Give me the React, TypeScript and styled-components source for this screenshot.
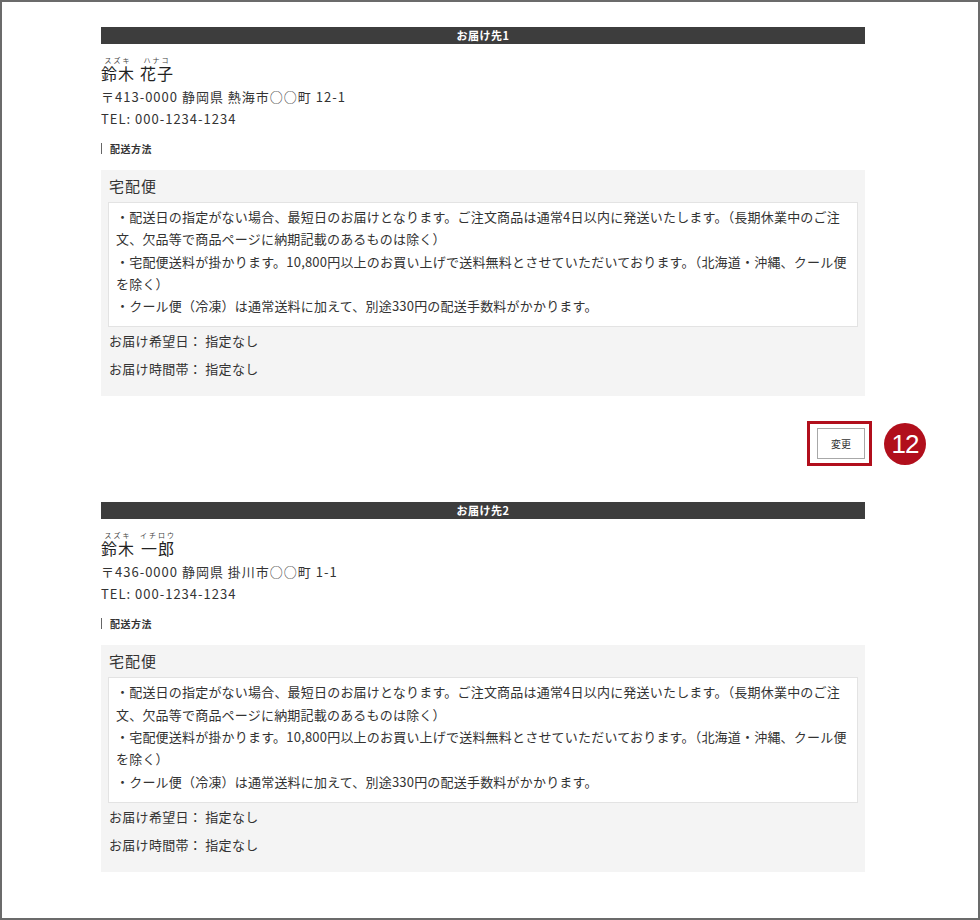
import React from "react";
import styled, { createGlobalStyle } from "styled-components";

const GlobalStyle = createGlobalStyle`
  html, body {
    margin: 0;
    padding: 0;
    background: #fff;
  }
  body {
    font-family: "Noto Sans CJK JP", "Noto Sans", sans-serif;
    color: #333;
  }
`;

const Frame = styled.div`
  box-sizing: border-box;
  width: 980px;
  height: 920px;
  border: 2px solid #6b6b6b;
  padding: 25px 0 0 99px;
  overflow: hidden;
`;

const Column = styled.div`
  width: 764px;
`;

const Section = styled.section`
  margin-bottom: 43px;
`;

const HeadBar = styled.div`
  height: 17px;
  background: #3d3d3d;
  color: #fff;
  font-size: 11px;
  font-weight: 700;
  line-height: 17px;
  text-align: center;
  letter-spacing: 0.5px;
`;

const NameRow = styled.div`
  margin-top: 12px;
  display: flex;
  align-items: flex-end;
  gap: 5px;
  color: #222;
`;

const RubyWord = styled.span`
  display: inline-flex;
  flex-direction: column;
  align-items: center;
`;

const Kana = styled.span`
  font-size: 7px;
  line-height: 8px;
  letter-spacing: 2px;
  color: #444;
`;

const Base = styled.span`
  font-size: 16px;
  line-height: 18px;
  letter-spacing: 1px;
`;

const InfoLine = styled.div`
  font-size: 13px;
  line-height: 22px;
  letter-spacing: 1px;
`;

const Address = styled.div`
  margin-top: 4px;
`;

const SubLabel = styled.div`
  margin-top: 13px;
  border-left: 1px solid #666;
  padding-left: 8px;
  font-size: 10px;
  font-weight: 700;
  line-height: 11px;
  letter-spacing: 0.5px;
  color: #333;
`;

const MethodBox = styled.div`
  margin-top: 16px;
  background: #f4f4f4;
  padding: 6px 7px 13px;
`;

const MethodTitle = styled.div`
  font-size: 15px;
  line-height: 20px;
  padding-left: 1px;
  margin-bottom: 6px;
  letter-spacing: 1px;
`;

const NoteBox = styled.div`
  background: #fff;
  border: 1px solid #e3e3e3;
  padding: 3px 5px 9px 7px;
  font-size: 13px;
  line-height: 22.3px;
  letter-spacing: 0.2px;
`;

const WishLine = styled.div`
  font-size: 13px;
  line-height: 28px;
  padding-left: 1px;
  letter-spacing: 0.3px;

  &:first-of-type {
    margin-top: 5px;
  }
`;

const ButtonRow = styled.div`
  display: flex;
  justify-content: flex-end;
  margin-top: 32px;
`;

const Highlight = styled.div`
  position: relative;
  display: flex;

  &::before {
    content: "";
    position: absolute;
    top: -7px;
    bottom: -7px;
    left: -10px;
    right: -7px;
    border: 3px solid #b10f1c;
    pointer-events: none;
  }
`;

const Badge = styled.div`
  position: absolute;
  left: calc(100% + 19px);
  top: 50%;
  transform: translateY(-50%);
  width: 42px;
  height: 42px;
  border-radius: 50%;
  background: #b10f1c;
  color: #fff;
  font-family: "Liberation Sans", Arial, sans-serif;
  font-size: 26px;
  line-height: 42px;
  text-align: center;
  letter-spacing: -1px;
`;

const ChangeButton = styled.button`
  width: 48px;
  height: 31px;
  background: #fff;
  border: 1px solid #a8a8a8;
  font-family: "Noto Sans CJK JP", sans-serif;
  font-size: 10px;
  color: #333;
  padding: 0;
  cursor: pointer;
`;

type Destination = {
  index: number;
  family: [string, string];
  given: [string, string];
  address: string;
};

const destinations: Destination[] = [
  {
    index: 1,
    family: ["鈴木", "スズキ"],
    given: ["花子", "ハナコ"],
    address: "〒413-0000 静岡県 熱海市○○町 12-1",
  },
  {
    index: 2,
    family: ["鈴木", "スズキ"],
    given: ["一郎", "イチロウ"],
    address: "〒436-0000 静岡県 掛川市○○町 1-1",
  },
];

const Word = ({ pair }: { pair: [string, string] }) => (
  <RubyWord>
    <Kana>{pair[1]}</Kana>
    <Base>{pair[0]}</Base>
  </RubyWord>
);

const DeliveryBlock = ({ data, withButton }: { data: Destination; withButton?: boolean }) => (
  <Section>
    <HeadBar>お届け先{data.index}</HeadBar>
    <NameRow>
      <Word pair={data.family} />
      <Word pair={data.given} />
    </NameRow>
    <Address>
      <InfoLine>{data.address}</InfoLine>
      <InfoLine>TEL: 000-1234-1234</InfoLine>
    </Address>
    <SubLabel>配送方法</SubLabel>
    <MethodBox>
      <MethodTitle>宅配便</MethodTitle>
      <NoteBox>
        ・配送日の指定がない場合、最短日のお届けとなります。ご注文商品は通常4日以内に発送いたします。（長期休業中のご注文、欠品等で商品ページに納期記載のあるものは除く）
        <br />
        ・宅配便送料が掛かります。10,800円以上のお買い上げで送料無料とさせていただいております。（北海道・沖縄、クール便を除く）
        <br />
        ・クール便（冷凍）は通常送料に加えて、別途330円の配送手数料がかかります。
      </NoteBox>
      <WishLine>お届け希望日： 指定なし</WishLine>
      <WishLine>お届け時間帯： 指定なし</WishLine>
    </MethodBox>
    {withButton && (
      <ButtonRow>
        <Highlight>
          <ChangeButton>変更</ChangeButton>
          <Badge>12</Badge>
        </Highlight>
      </ButtonRow>
    )}
  </Section>
);

export default function App() {
  return (
    <>
      <GlobalStyle />
      <Frame>
        <Column>
          {destinations.map((d, i) => (
            <DeliveryBlock key={d.index} data={d} withButton={i === 0} />
          ))}
        </Column>
      </Frame>
    </>
  );
}
